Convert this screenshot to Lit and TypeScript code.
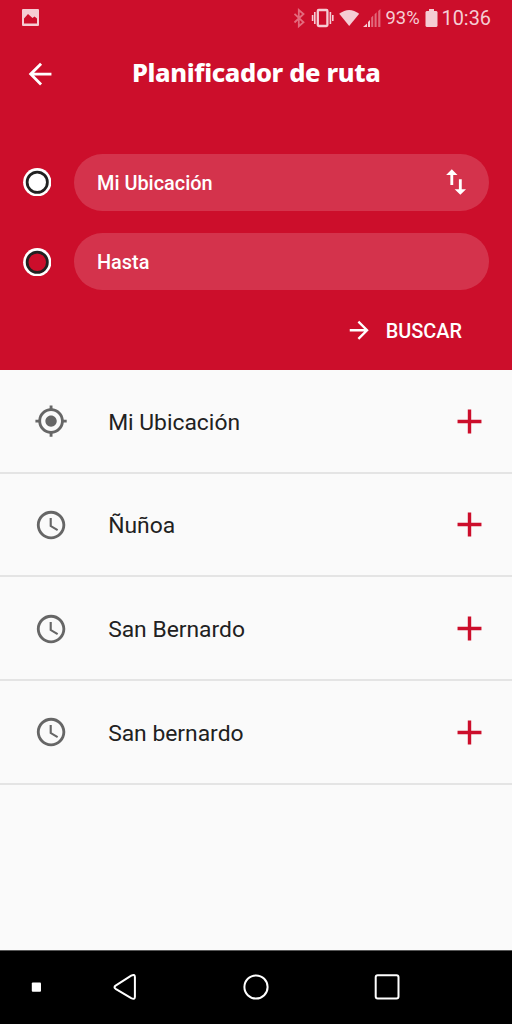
import { LitElement, html, css, svg } from "lit";
import { customElement } from "lit/decorators.js";

const icons = {
  back: svg`<path d="M20 11H7.83l5.59-5.59L12 4l-8 8 8 8 1.41-1.41L7.83 13H20v-2z"/>`,
  forward: svg`<path d="M12 4l-1.41 1.41L16.17 11H4v2h12.17l-5.58 5.59L12 20l8-8z"/>`,
  swap: svg`<path d="M16 17.01V10h-2v7.01h-3L15 21l4-3.99h-3zM9 3L5 6.99h3V14h2V6.99h3L9 3z"/>`,
  gps: svg`<path d="M12 8c-2.21 0-4 1.79-4 4s1.79 4 4 4 4-1.79 4-4-1.79-4-4-4zm8.94 3c-.46-4.17-3.77-7.48-7.94-7.94V1h-2v2.06C6.83 3.52 3.52 6.83 3.06 11H1v2h2.06c.46 4.17 3.77 7.48 7.94 7.94V23h2v-2.06c4.17-.46 7.48-3.77 7.94-7.94H23v-2h-2.06zM12 19c-3.87 0-7-3.13-7-7s3.13-7 7-7 7 3.13 7 7-3.13 7-7 7z"/>`,
  clock: svg`<path d="M11.99 2C6.47 2 2 6.48 2 12s4.47 10 9.99 10C17.52 22 22 17.52 22 12S17.52 2 11.99 2zM12 20c-4.42 0-8-3.58-8-8s3.58-8 8-8 8 3.58 8 8-3.58 8-8 8zm.5-13H11v6l5.25 3.15.75-1.23-4.5-2.67z"/>`,
  add: svg`<path d="M19 13h-6v6h-2v-6H5v-2h6V5h2v6h6v2z"/>`,
};

const places = [
  { icon: icons.gps, name: "Mi Ubicación" },
  { icon: icons.clock, name: "Ñuñoa" },
  { icon: icons.clock, name: "San Bernardo" },
  { icon: icons.clock, name: "San bernardo" },
];

const icon = (shape: unknown, size = "") =>
  html`<svg class="icon ${size}" viewBox="0 0 24 24">${shape}</svg>`;

@customElement("app-root")
export class AppRoot extends LitElement {
  static styles = css`
    :host {
      display: flex;
      flex-direction: column;
      width: 512px;
      height: 1024px;
      overflow: hidden;
      background: #fafafa;
      font-family: Roboto, sans-serif;
    }
    svg { display: block; flex: none; fill: currentColor; }
    .icon { width: 34.13px; height: 34.13px; }
    .small { width: 28.44px; height: 28.44px; }
    .large { width: 41px; height: 41px; }
    .top {
      box-sizing: border-box;
      height: 369.7px;
      flex: none;
      background: #cc0e2b;
      color: #fff;
    }
    .status {
      display: flex;
      align-items: center;
      height: 35px;
      padding: 0 21.5px 0 22px;
      color: #f5cdd4;
    }
    .battery { font-size: 18.4px; margin-left: 5px; width: 39px; }
    .time { font-size: 19.9px; width: 49px; margin: 1px 0 0 4px; }
    .spacer { flex: 1; }
    .bar { display: flex; align-items: center; height: 78px; padding-left: 22.8px; }
    .title {
      margin: 0 0 5px 75px;
      font: 800 25.5px/36px "Noto Sans", sans-serif;
      letter-spacing: -0.35px;
      white-space: nowrap;
    }
    .form { padding: 40.5px 23px 0 22.5px; }
    .line { display: flex; align-items: center; gap: 23px; height: 57px; margin-bottom: 22.8px; }
    .field {
      flex: 1;
      box-sizing: border-box;
      display: flex;
      align-items: center;
      justify-content: space-between;
      height: 57px;
      padding: 0 15.5px 0 23px;
      border-radius: 29px;
      background: rgba(255, 255, 255, 0.155);
      font-size: 19.9px;
      font-weight: 500;
    }
    .label { padding-top: 2px; }
    .search {
      display: flex;
      align-items: center;
      justify-content: flex-end;
      gap: 12px;
      padding: 3px 27px 0 0;
      font-size: 19.9px;
      font-weight: 500;
    }
    .word { padding-top: 2px; }
    .row {
      box-sizing: border-box;
      display: flex;
      align-items: center;
      height: 103.82px;
      padding: 1px 22.2px 0 34px;
      border-bottom: 2px solid #e4e4e4;
      color: #666;
    }
    .name { flex: 1; margin: 2px 0 0 40px; font-size: 22.85px; color: #212121; }
    .add { color: #cc0e2b; display: flex; }
    .list { flex: 1; }
    .nav { flex: none; box-sizing: border-box; height: 74px; background: #000; border-top: 1px solid #585858; }
  `;

  render() {
    return html`
      <header class="top">
        <div class="status">
          <svg width="17" height="17" viewBox="0 0 17 17">
            <path fill-rule="evenodd" d="M1 0h15a1 1 0 0 1 1 1v15a1 1 0 0 1-1 1H1a1 1 0 0 1-1-1V1a1 1 0 0 1 1-1zM2 14.5h13v-5L12.5 7.5l-2 1.5L6 5 2 9.5z"/>
          </svg>
          <span class="spacer"></span>
          <svg width="88" height="22" viewBox="293 6 88 22">
            <path d="M294.5 12.8l9 8.5-4.7 4V9l4.7 4-9 8.5" fill="none" stroke="#e36b7d" stroke-width="1.8"/>
            <rect x="317.8" y="9" width="9.6" height="16" rx="1" fill="none" stroke="currentColor" stroke-width="2.3"/>
            <path d="M314.8 11v12M330.4 11v12M312.6 14v6M332.8 14v6" fill="none" stroke="currentColor" stroke-width="1.6"/>
            <path d="M339.2 12.8Q349.2 5.2 359.2 12.8L349.2 25z"/>
            <path d="M363 26l4-3.5V26zM368 26v-5l2-2v7z"/>
            <path d="M371.2 26v-9.5l2-2V26zM374.6 26V13.3l2-2V26zM378.2 26V10l2.2-2V26z" fill="#e16a7c"/>
          </svg>
          <span class="battery">93%</span>
          <svg width="13" height="20" viewBox="0 0 13 20">
            <path d="M4 1h5v2h2.5l1 1v14l-1 1h-10l-1-1V4l1-1H4z"/>
          </svg>
          <span class="time">10:36</span>
        </div>
        <div class="bar">
          ${icon(icons.back)}
          <h1 class="title">Planificador de ruta</h1>
        </div>
        <div class="form">
          ${this.line("Mi Ubicación", "#fff", true)}
          ${this.line("Hasta", "#cc0e2b", false)}
          <div class="search">${icon(icons.forward, "small")}<span class="word">BUSCAR</span></div>
        </div>
      </header>
      <main class="list">
        ${places.map(
          (p) => html`<div class="row">
            ${icon(p.icon)}
            <span class="name">${p.name}</span>
            <span class="add">${icon(icons.add, "large")}</span>
          </div>`
        )}
      </main>
      <footer class="nav">
        <svg width="512" height="73" viewBox="0 951 512 73">
          <rect x="31.8" y="982.6" width="9.2" height="9.2" rx="1" fill="#fff"/>
          <g fill="none" stroke="#fff" stroke-width="2" stroke-linejoin="round">
            <path d="M115.6 985.6L131.2 975.6Q134.8 973.8 134.9 977V997Q134.8 1000 131.2 998.2L115.6 988.8Q113.4 987.1 115.6 985.6z"/>
            <circle cx="256" cy="987" r="11.6"/>
            <rect x="375.7" y="975.3" width="22.8" height="23.2" rx="2"/>
          </g>
        </svg>
      </footer>
    `;
  }

  private line(label: string, fill: string, swap: boolean) {
    return html`<div class="line">
      <svg width="28.5" height="28.5" viewBox="0 0 29 29">
        <circle cx="14.5" cy="14.5" r="14.4" fill="#fff"/>
        <circle cx="14.5" cy="14.5" r="10.3" fill=${fill} stroke="#212121" stroke-width="2.8"/>
      </svg>
      <div class="field"><span class="label">${label}</span>${swap ? icon(icons.swap) : ""}</div>
    </div>`;
  }
}
